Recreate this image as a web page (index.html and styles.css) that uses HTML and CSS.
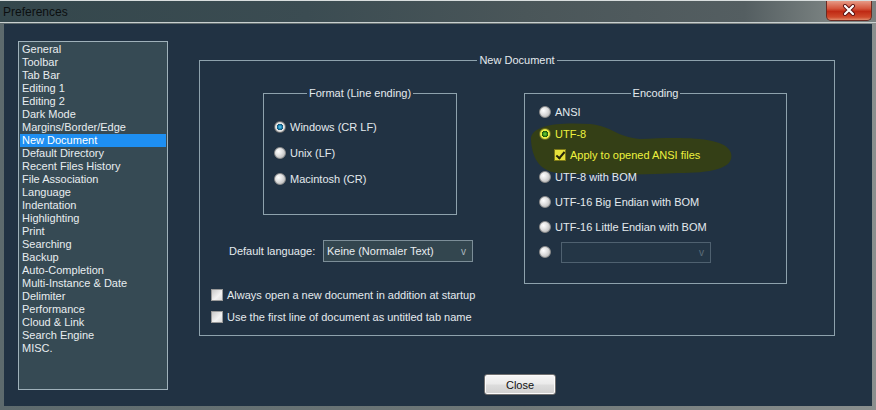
FILE: index.html
```html
<!DOCTYPE html>
<html lang="en">
<head>
    <meta charset="UTF-8">
    <title>Preferences</title>
    <link rel="stylesheet" href="styles.css">
</head>
<body>
    <div class="window">
        <div class="titlebar">
            <span class="title">Preferences</span>
            <div class="title-close">
                <svg width="18" height="12" viewBox="0 0 18 12">
                    <path d="M5 2 L13 10 M13 2 L5 10" stroke="#5a1010" stroke-width="4" stroke-linecap="round"/>
                    <path d="M5 2 L13 10 M13 2 L5 10" stroke="#ffffff" stroke-width="2.2" stroke-linecap="round"/>
                </svg>
            </div>
        </div>

        <div class="client">
            <ul class="nav">
                <li>General</li>
                <li>Toolbar</li>
                <li>Tab Bar</li>
                <li>Editing 1</li>
                <li>Editing 2</li>
                <li>Dark Mode</li>
                <li>Margins/Border/Edge</li>
                <li class="selected">New Document</li>
                <li>Default Directory</li>
                <li>Recent Files History</li>
                <li>File Association</li>
                <li>Language</li>
                <li>Indentation</li>
                <li>Highlighting</li>
                <li>Print</li>
                <li>Searching</li>
                <li>Backup</li>
                <li>Auto-Completion</li>
                <li>Multi-Instance &amp; Date</li>
                <li>Delimiter</li>
                <li>Performance</li>
                <li>Cloud &amp; Link</li>
                <li>Search Engine</li>
                <li>MISC.</li>
            </ul>

            <div class="content">
                <div class="group main-group">
                    <div class="group-title">New Document</div>
                    <div class="cols">
                        <div class="left-col">
                            <div class="group format">
                                <div class="group-title">Format (Line ending)</div>
                                <div class="option-list">
                                    <div class="option"><span class="radio checked"></span>Windows (CR LF)</div>
                                    <div class="option"><span class="radio"></span>Unix (LF)</div>
                                    <div class="option"><span class="radio"></span>Macintosh (CR)</div>
                                </div>
                            </div>

                            <div class="lang-row">
                                <span class="lang-label">Default language:</span>
                                <div class="combo lang-combo">
                                    <span>Keine (Normaler Text)</span>
                                    <span class="combo-arrow">v</span>
                                </div>
                            </div>

                            <div class="check-list">
                                <div class="option"><span class="checkbox"></span>Always open a new document in addition at startup</div>
                                <div class="option"><span class="checkbox"></span>Use the first line of document as untitled tab name</div>
                            </div>
                        </div>

                        <div class="group encoding">
                            <div class="group-title">Encoding</div>
                            <!-- marker scribble behind UTF-8 -->
                            <svg class="marker" width="210" height="56" viewBox="0 0 210 56">
                                <path d="M3 18 C2 3 30 0 62 2 C84 4 88 15 112 17 C152 15 198 14 203 31 C207 47 182 51 150 51 C110 53 60 53 30 51 C10 49 4 34 3 18 Z" fill="#343f16"/>
                            </svg>
                            <div class="option-list tight">
                                <div class="option"><span class="radio"></span>ANSI</div>
                                <div class="option marked"><span class="radio checked-yellow"></span>UTF-8</div>
                                <div class="option marked sub-option"><span class="checkbox checked"></span>Apply to opened ANSI files</div>
                                <div class="option"><span class="radio"></span>UTF-8 with BOM</div>
                            </div>
                            <div class="option-list loose">
                                <div class="option"><span class="radio"></span>UTF-16 Big Endian with BOM</div>
                                <div class="option"><span class="radio"></span>UTF-16 Little Endian with BOM</div>
                                <div class="option combo-option">
                                    <span class="radio"></span>
                                    <div class="combo enc-combo"><span></span><span class="combo-arrow">v</span></div>
                                </div>
                            </div>
                        </div>
                    </div>
                </div>

                <div class="footer">
                    <button class="button">Close</button>
                </div>
            </div>
        </div>
    </div>
</body>
</html>
```

FILE: styles.css
```css
body {
    margin: 0;
    padding: 0;
    font-family: "Liberation Sans", Arial, sans-serif;
    font-size: 11px;
    color: #e4eaee;
    background-color: #6b7477;
}

.window {
    width: 876px;
    height: 410px;
    display: flex;
    flex-direction: column;
    background: linear-gradient(to right, #5d6a6d, #6f7878 60%, #8a8f8e);
    overflow: hidden;
}

.titlebar {
    height: 23px;
    border-top: 1px solid #d9dede;
    border-bottom: 1px solid #c9d0d0;
    box-sizing: border-box;
    display: flex;
    align-items: center;
    justify-content: space-between;
    background: linear-gradient(to right, #34474c 0%, #3b4c52 35%, #4a5659 60%, #545e61 85%, #7b8382 95%, #7a8180 100%);
    flex-shrink: 0;
}

.title {
    padding-left: 3px;
    font-size: 12px;
    color: #0c0f10;
}

.title-close {
    width: 46px;
    height: 20px;
    margin: -2px 4px 0 0;
    border: 1px solid #6b2a22;
    border-top: none;
    border-radius: 0 0 5px 5px;
    box-sizing: border-box;
    display: flex;
    align-items: center;
    justify-content: center;
    background: linear-gradient(to bottom, #e69a86 0%, #d4553c 40%, #c02a14 55%, #cf4a2c 85%, #e08a6a 100%);
}

.client {
    flex: 1;
    margin: 1px 4px 4px 4px;
    padding: 17px 0 0 14px;
    background-color: #213243;
    display: flex;
    align-items: flex-start;
}

/* category list */
.nav {
    list-style: none;
    margin: 0;
    padding: 1px 1px;
    width: 150px;
    height: 349px;
    box-sizing: border-box;
    border: 1px solid #9fb1ba;
    background-color: #364a54;
}

.nav li {
    height: 13px;
    line-height: 13px;
    padding-left: 2px;
    white-space: nowrap;
    color: #e8edf0;
}

.nav li.selected {
    background-color: #1e8ff2;
    color: #ffffff;
}

.content {
    margin-left: 31px;
    display: flex;
    flex-direction: column;
}

/* group boxes */
.group {
    border: 1px solid #8ea2ad;
    box-sizing: border-box;
}

.group-title {
    display: table;
    margin: -7px auto 0;
    padding: 0 2px;
    line-height: 13px;
    background-color: #213243;
    color: #e4eaee;
}

.main-group {
    margin-top: 19px;
    width: 636px;
    height: 276px;
}

.cols {
    display: flex;
    align-items: flex-start;
    margin-top: 26px;
    padding-left: 11px;
}

.left-col {
    width: 313px;
    flex-shrink: 0;
}

.format {
    margin-left: 52px;
    width: 194px;
    height: 122px;
}

.format .option-list {
    padding: 20px 0 0 10px;
    gap: 13px;
}

.option-list {
    display: flex;
    flex-direction: column;
}

.option {
    height: 13px;
    display: flex;
    align-items: center;
    white-space: nowrap;
    position: relative;
}

/* radio buttons and check boxes */
.radio {
    width: 12px;
    height: 12px;
    margin-right: 4px;
    border-radius: 50%;
    box-sizing: border-box;
    border: 1px solid #8d8d8d;
    background: radial-gradient(circle at 35% 35%, #ffffff 0%, #e2e2e2 40%, #a9a9a9 100%);
    flex-shrink: 0;
}

.radio.checked {
    background: radial-gradient(circle at 50% 50%, #5cc6f0 0%, #1a7fae 28%, #0e4f73 42%, #e6e6e6 50%, #bdbdbd 100%);
    border-color: #6a6a6a;
}

.radio.checked-yellow {
    background: radial-gradient(circle at 50% 50%, #7bd03a 0%, #2f8a18 30%, #1c4a0c 42%, #ecf04a 50%, #c8c828 100%);
    border-color: #6b6b20;
}

.checkbox {
    width: 12px;
    height: 12px;
    margin-right: 4px;
    box-sizing: border-box;
    border: 1px solid #9a9a9a;
    background: linear-gradient(135deg, #c9c9c9, #f3f3f3 60%, #dcdcdc);
    flex-shrink: 0;
    position: relative;
}

.checkbox.checked {
    background: #e6e23c;
    border-color: #7e7a18;
}

.checkbox.checked::after {
    content: "";
    position: absolute;
    left: 3px;
    top: 0px;
    width: 3px;
    height: 7px;
    border: solid #22240c;
    border-width: 0 2px 2px 0;
    transform: rotate(40deg);
}

/* language row */
.lang-row {
    margin-top: 25px;
    padding-left: 18px;
    display: flex;
    align-items: center;
}

.lang-label {
    width: 94px;
}

.combo {
    height: 22px;
    box-sizing: border-box;
    border: 1px solid #7c8e98;
    background-color: #33464f;
    display: flex;
    align-items: center;
    justify-content: space-between;
    padding: 0 6px 0 3px;
    color: #e8edf0;
}

.lang-combo {
    width: 150px;
}

.combo-arrow {
    color: #a9b6bd;
    font-size: 10px;
}

.check-list {
    margin-top: 26px;
    display: flex;
    flex-direction: column;
    gap: 9px;
}

/* encoding box */
.encoding {
    width: 263px;
    height: 191px;
    position: relative;
}

.marker {
    position: absolute;
    left: 3px;
    top: 28px;
}

.encoding .option-list {
    padding-left: 14px;
}

.tight {
    margin-top: 5px;
    gap: 9px;
}

.loose {
    margin-top: 12px;
    gap: 12px;
}

.marked {
    color: #eef23e;
}

.sub-option {
    padding-left: 15px;
    margin-top: -1px;
}

.combo-option {
    margin-top: -3px;
    height: 20px;
}

.combo-option .radio {
    margin-right: 10px;
}

.enc-combo {
    width: 150px;
    height: 21px;
    background-color: #243646;
    border-color: #4f6170;
}

.enc-combo .combo-arrow {
    color: #5d6e7a;
}

/* bottom button */
.footer {
    display: flex;
    margin-top: 38px;
    padding-left: 285px;
}

.button {
    width: 72px;
    height: 21px;
    padding: 0;
    font-family: "Liberation Sans", Arial, sans-serif;
    font-size: 11px;
    color: #111111;
    border: 1px solid #707070;
    border-radius: 3px;
    background: linear-gradient(to bottom, #f6f6f6 0%, #ebebeb 45%, #dcdcdc 55%, #cfcfcf 100%);
    box-shadow: inset 0 0 0 1px #fbfbfb;
    cursor: pointer;
}
```
